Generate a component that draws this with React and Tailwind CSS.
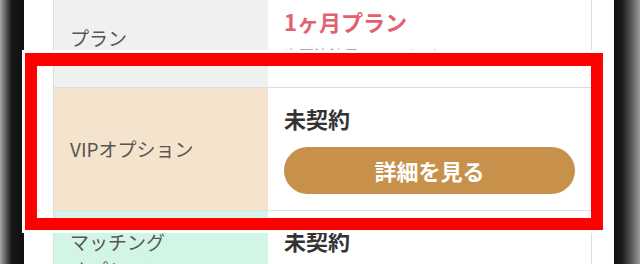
export default function App() {
  return (
    <div
      className="relative flex h-[264px] w-[640px] overflow-hidden bg-white"
      style={{ fontFamily: '"Noto Sans CJK JP", "Noto Sans", sans-serif' }}
    >
      {/* phone bezel, left */}
      <div className="h-full w-[24px] shrink-0 bg-gradient-to-r from-[#a8a8a8] via-[#161616] via-50% to-[#111]" />

      {/* screen */}
      <div className="flex-1 bg-white pl-[29px] pr-[22px]">
        <div className="-mt-[11px] border-x border-[#dddddd]">
          {/* Plan row */}
          <div className="flex border-b border-[#dddddd]">
            <div className="flex w-[214px] shrink-0 items-center bg-[#f0f0f0] pl-[16px] text-[19px] text-[#555]">
              プラン
            </div>
            <div className="flex-1 px-[16px] pb-[21px] pt-[17px]">
              <div className="text-[22px] font-bold leading-[30px] text-[#e4606f]">1ヶ月プラン</div>
              <div className="mt-[8px] text-[15px] leading-[22px] text-[#aaa]">次回決済日：2024/05/10</div>
            </div>
          </div>

          {/* VIP row */}
          <div className="flex border-b border-[#dde3e3]">
            <div className="flex w-[214px] shrink-0 items-center bg-[#f4e3cd] pl-[16px] text-[19px] text-[#555]">
              VIPオプション
            </div>
            <div className="flex-1 px-[16px] pb-[16px] pt-[15px]">
              <div className="text-[22px] font-bold leading-[30px] text-[#333]">未契約</div>
              <button className="mt-[14px] flex h-[47px] w-full items-center justify-center rounded-full bg-[#c8914b] text-[22px] font-bold text-white">
                詳細を見る
              </button>
            </div>
          </div>

          {/* Matching row */}
          <div className="flex">
            <div className="w-[214px] shrink-0 bg-[#d3f5e5] pl-[16px] pt-[17px] text-[19px] leading-[28px] text-[#555]">
              マッチング
              <br />
              オプション
            </div>
            <div className="flex-1 px-[16px] pb-[16px] pt-[14px]">
              <div className="text-[22px] font-bold leading-[30px] text-[#333]">未契約</div>
              <button className="mt-[14px] flex h-[47px] w-full items-center justify-center rounded-full bg-[#c8914b] text-[22px] font-bold text-white">
                詳細を見る
              </button>
            </div>
          </div>
        </div>
      </div>

      {/* phone bezel, right */}
      <div className="h-full w-[26px] shrink-0 bg-gradient-to-r from-[#111] via-[#1a1a1a] via-30% to-[#9c9c9c]" />

      {/* highlight annotation */}
      <div className="absolute left-[22px] top-[50px] h-[183px] w-[584px] border-[3px] border-white">
        <div className="h-full w-full border-[12px] border-t-[13px] border-[#ff0000]" />
      </div>
    </div>
  )
}
